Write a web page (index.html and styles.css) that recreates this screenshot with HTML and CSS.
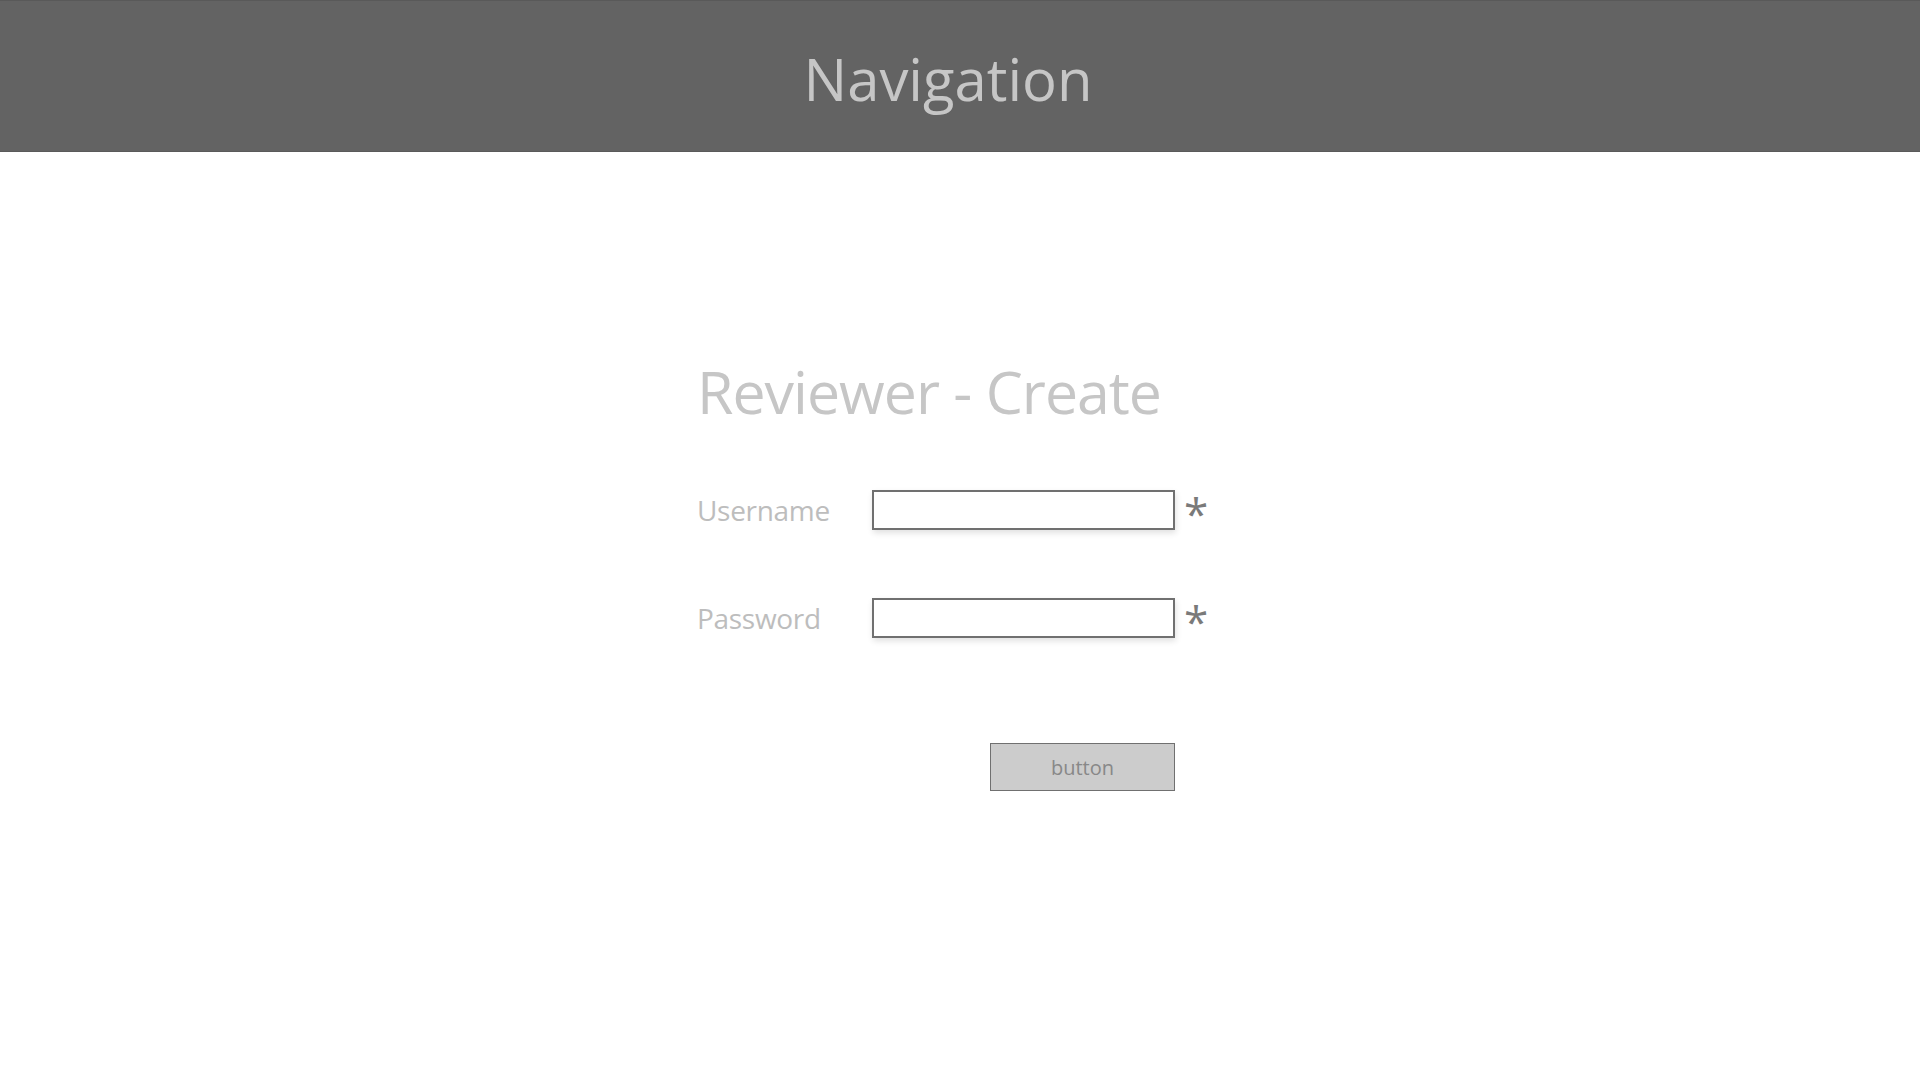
FILE: index.html
```html
<!DOCTYPE html>
<html lang="en">
<head>
<meta charset="utf-8">
<title>Reviewer - Create</title>
<link rel="stylesheet" href="styles.css">
</head>
<body>
<header class="nav">
  <h1 class="nav-title">Navigation</h1>
</header>
<main class="page">
  <h2 class="page-title">Reviewer - Create</h2>
  <form class="form">
    <div class="row">
      <label class="label" for="username">Username</label>
      <input class="field" id="username" type="text">
      <span class="req">*</span>
    </div>
    <div class="row">
      <label class="label" for="password">Password</label>
      <input class="field" id="password" type="password">
      <span class="req">*</span>
    </div>
    <div class="actions">
      <button class="btn" type="button">button</button>
    </div>
  </form>
</main>
</body>
</html>
```
FILE: styles.css
```css
html, body {
  margin: 0;
  padding: 0;
  background: #ffffff;
}
body {
  font-family: "Open Sans", "Noto Sans", sans-serif;
  width: 1920px;
  height: 1080px;
  overflow: hidden;
}
.nav {
  height: 152px;
  box-sizing: border-box;
  background: #636363;
  border-top: 1px solid #595959;
  border-bottom: 1px solid #5a5a5a;
  display: flex;
  justify-content: center;
}
.nav-title {
  margin: 0;
  padding-top: 49px;
  padding-right: 24px;
  font-size: 58px;
  font-weight: 400;
  line-height: 58px;
  color: #c6c6c6;
  letter-spacing: 0;
}
.page {
  padding: 209px 0 0 697px;
}
.page-title {
  margin: 0;
  font-size: 59px;
  line-height: 60px;
  font-weight: 400;
  color: #c6c6c6;
  letter-spacing: -1px;
}
.form {
  margin-top: 69px;
  display: flex;
  flex-direction: column;
  gap: 68px;
  width: 530px;
}
.row {
  display: flex;
  align-items: center;
  height: 40px;
}
.label {
  width: 175px;
  font-size: 28px;
  line-height: 40px;
  color: #bdbdbd;
  letter-spacing: -0.3px;
}
.field {
  width: 303px;
  height: 40px;
  box-sizing: border-box;
  margin: 0;
  border: 2px solid #707070;
  background: #ffffff;
  box-shadow: 1px 3px 6px rgba(0, 0, 0, 0.12);
  outline: none;
}
.req {
  margin-left: 9px;
  font-size: 44px;
  line-height: 40px;
  height: 40px;
  color: #7a7a7a;
  padding-top: 3px;
  box-sizing: border-box;
  font-family: "Open Sans", sans-serif;
}
.actions {
  display: flex;
  justify-content: flex-end;
  width: 478px;
  margin-top: 37px;
}
.btn {
  width: 185px;
  height: 48px;
  box-sizing: border-box;
  border: 1.5px solid #707070;
  background: #cccccc;
  color: #888888;
  font-family: "Open Sans", "Noto Sans", sans-serif;
  font-size: 20px;
  padding: 0;
  margin: 0;
}
```
